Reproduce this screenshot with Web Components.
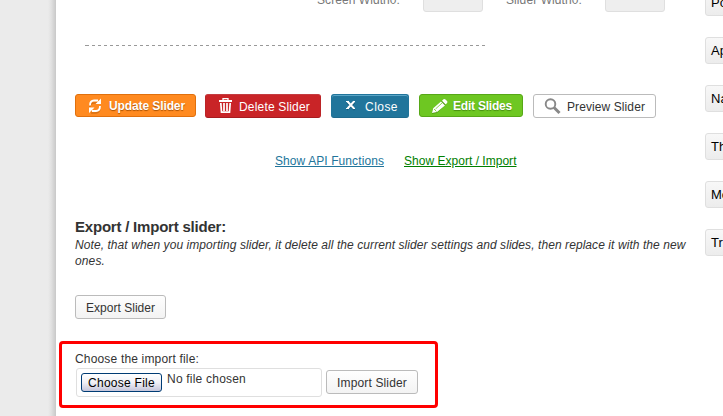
<!DOCTYPE html>
<html lang="en"><head><meta charset="utf-8"><title>Slider settings</title>
<style>html,body{margin:0;width:723px;height:416px;overflow:hidden;background:#fff}</style></head>
<body><slider-page></slider-page>
<script>
// Inline text whose tracking is adjusted to occupy a given width.
class FitText extends HTMLElement{
  connectedCallback(){
    const r=this.attachShadow({mode:'open'});
    r.innerHTML='<style>:host{display:inline-block;white-space:nowrap;flex:none}span{display:inline-block;white-space:nowrap}</style><span></span>';
    const s=r.querySelector('span');s.textContent=this.getAttribute('text');
    const w=+this.getAttribute('w');
    if(w){const n=s.textContent.length;s.style.letterSpacing=((w-s.getBoundingClientRect().width)/n)+'px';this.style.width=w+'px';}
    if(this.hasAttribute('underline'))s.style.textDecoration='underline';
  }
}
// Push button: kind selects the colours, the icon slot precedes the label.
class SliderButton extends HTMLElement{
  connectedCallback(){
    this.attachShadow({mode:'open'}).innerHTML=`<style>
:host{display:flex;box-sizing:border-box;flex:none;height:24px;border:1px solid #bbb;border-radius:3px;background:linear-gradient(#fefefe,#f3f3f3);color:#333;line-height:14px;padding:5px 0 0 10px}
:host([kind=orange]){height:23px;background:#ff8a20;border-color:#e0700d;color:#fff;font-weight:bold;text-shadow:0 1px 1px #a85000;padding-top:4px}
:host([kind=red]){background:#c92427;border-color:#c43c40 #bb2427 #a71c20;color:#fff}
:host([kind=blue]){background:#21759b;border-color:#21759b #21759b #1e6a8d;box-shadow:inset 0 1px 0 #5aa5c6;color:#fff}
:host([kind=green]){height:23px;background:#6ec722;border-color:#57a817;color:#fff;font-weight:bold;text-shadow:0 1px 1px #468c10;padding-top:4px}
:host([kind=white]){background:#fff}
::slotted(svg){margin:-2px 0 0 -10px;flex:none;height:18px;overflow:visible}
</style><slot name="icon"></slot><slot></slot>`;
  }
}
class SidePanelTab extends HTMLElement{
  connectedCallback(){
    this.attachShadow({mode:'open'}).innerHTML=`<style>:host{display:block;box-sizing:border-box;height:27px;width:60px;margin-bottom:21px;border:1px solid #dfdfdf;border-radius:3px;background:linear-gradient(#f8f8f8,#ececec);font-size:13px;line-height:25px;padding-left:5px;color:#000;white-space:nowrap}</style><slot></slot>`;
  }
}
class FilePicker extends HTMLElement{
  connectedCallback(){
    this.attachShadow({mode:'open'}).innerHTML=`<style>
:host{display:flex;box-sizing:border-box;width:246px;height:29px;border:1px solid #dfdfdf;border-radius:3px;padding:4px;line-height:14px;color:#333}
.choose{box-sizing:border-box;width:81px;height:19px;border:1px solid #003c74;border-radius:3px;background:linear-gradient(#fff,#f0f0f6 50%,#c5c5da);padding:2px 0 0 6px;color:#000;margin-right:5px;flex:none}
.name{margin-top:-1px}</style><div class="choose"><fit-text text="Choose File" w="67"></fit-text></div><div class="name"><fit-text text="No file chosen" w="79"></fit-text></div>`;
  }
}
class SliderPage extends HTMLElement{
  connectedCallback(){
    this.attachShadow({mode:'open'}).innerHTML=`<style>
:host{display:grid;grid-template-columns:56px 649px 18px;width:723px;height:416px;overflow:hidden;background:#fff;font:12px/16px "Liberation Sans",Arial,sans-serif;color:#333}
.rail{background:linear-gradient(90deg,transparent 48px,#0000000a 51px,#00000026 56px),#ebebeb;height:416px}
main{padding-left:19px;height:416px;box-sizing:border-box;min-width:0}
.fields{display:flex;height:45px;padding-left:242px;color:#777}
.fields fit-text{margin-top:-8px}
.field{box-sizing:border-box;width:60px;height:22px;margin-top:-10px;border:1px solid #dfdfdf;border-radius:3px;background:#eee}
.rule{width:400px;height:1px;margin-left:10px;background:repeating-linear-gradient(90deg,#999 0 3px,transparent 3px 6px) 1px 0,linear-gradient(#999,#999) 0 0/1px 1px no-repeat}
.actions{display:flex;margin-top:48px;height:24px}
.links{display:flex;gap:20px;margin:35px 0 0 200px;height:16px;color:#21759b}
.green{color:#008000}
h3{margin:49px 0 0;font-size:15px;line-height:18px;height:19px}
.note{font-style:italic;height:32px}
.export{width:91px;margin-top:26px}
.frame{box-sizing:border-box;width:379px;height:67px;margin:22px 0 0 -16px;border:3px solid #f00;border-radius:4px;padding:7px 0 0 13px}
.upload{display:flex;gap:4px;margin:1px 0 0 1px}
.upload slider-button{margin-top:2px;width:92px}
aside{padding-top:0;margin-top:-11px;height:427px;overflow:hidden}
</style>
<div class="rail"></div>
<main>
<div class="fields"><fit-text text="Screen Width0:" w="83"></fit-text><div class="field" style="margin-left:23px"></div><fit-text text="Slider Width0:" w="76" style="margin-left:23px"></fit-text><div class="field" style="margin-left:23px"></div></div>
<div class="rule"></div>
<div class="actions">
<slider-button kind="orange" style="width:121px;margin-right:9px"><svg slot="icon" width="33" height="18" viewBox="0 0 33 18"><g transform="translate(0 1)"><g fill="none" stroke="#a85000" stroke-width="1.500" opacity=".45" transform="translate(0 1)"><path d="M14 8V7.500Q14 4 18 4H22M24 10Q23 14 19 14H15"/></g><g fill="none" stroke="#fff" stroke-width="1.800"><path d="M14 7.500C14 4 15.500 2.500 18 2.500H22M24 8C24 11.500 22.500 13 20 13H16"/></g><path fill="#fff" d="M25 .500V6H19.500zM13 15V9.500H18.500z"/></g></svg><fit-text text="Update Slider" w="76"></fit-text></slider-button>
<slider-button kind="red" style="width:116px;margin-right:10px"><svg slot="icon" width="33" height="18" viewBox="0 0 33 18"><g fill="none" stroke="#fff"><path stroke-width="2" d="M13 3H26"/><path stroke-width="1.300" d="M17 2.500V.700H22V2.500"/><path stroke-width="1.700" d="M14.800 5L15.500 14.200H23.500L24.200 5M18 5V13M21 5V13"/></g></svg><fit-text text="Delete Slider" w="71"></fit-text></slider-button>
<slider-button kind="blue" style="width:78px;margin-right:10px"><svg slot="icon" width="33" height="18" viewBox="0 0 33 18"><path fill="none" stroke="#083f5a" stroke-width="1.500" opacity=".5" d="M15 5L22.500 12M22.500 5L15 12"/><path fill="none" stroke="#fff" stroke-width="1.900" d="M15.500 3.500L22 10.500M22 3.500L15.500 10.500"/><path stroke="#fff" d="M14 3.500H17M21 3.500H23M14 10.500H17M21 10.500H23"/></svg><fit-text text="Close" w="33"></fit-text></slider-button>
<slider-button kind="green" style="width:104px;margin-right:10px"><svg slot="icon" width="33" height="18" viewBox="0 0 33 18"><path fill="#468c10" opacity=".7" d="M12 17L13 12L22 4L26 7.500L17 16z"/><path fill="#fff" d="M12 16L13.200 11.300L21 4.500L25 8.500L17 15zM22 3.700L23.500 2.300Q24.500 1.500 25.500 2.500L27 4Q28 5 27 6L25.700 7.500z"/><path fill="none" stroke="#6ec722" stroke-width=".8" d="M14 12L16.500 14.500M15.500 12L22 6"/></svg><fit-text text="Edit Slides" w="59"></fit-text></slider-button>
<slider-button kind="white" style="width:123px"><svg slot="icon" width="33" height="18" viewBox="0 0 33 18"><circle cx="16.500" cy="6" r="4.800" fill="none" stroke="#888" stroke-width="1.900"/><path d="M20 9.500L25.500 15" stroke="#888" stroke-width="3"/></svg><fit-text text="Preview Slider" w="78"></fit-text></slider-button>
</div>
<div class="links"><fit-text text="Show API Functions" w="109" underline></fit-text><fit-text class="green" text="Show Export / Import" w="112.500" underline></fit-text></div>
<h3><fit-text text="Export / Import slider:" w="151"></fit-text></h3>
<div class="note"><fit-text text="Note, that when you importing slider, it delete all the current slider settings and slides, then replace it with the new" w="610.500"></fit-text><br><fit-text text="ones." w="30"></fit-text></div>
<slider-button class="export"><fit-text text="Export Slider" w="69"></fit-text></slider-button>
<div class="frame"><div><fit-text text="Choose the import file:" w="124"></fit-text></div><div class="upload"><file-picker></file-picker><slider-button><fit-text text="Import Slider" w="70"></fit-text></slider-button></div></div>
</main>
<aside><side-panel-tab>Po</side-panel-tab><side-panel-tab>Ap</side-panel-tab><side-panel-tab>Na</side-panel-tab><side-panel-tab>Th</side-panel-tab><side-panel-tab>Mo</side-panel-tab><side-panel-tab>Tr</side-panel-tab></aside>`;
  }
}
customElements.define('fit-text',FitText);
customElements.define('slider-button',SliderButton);
customElements.define('side-panel-tab',SidePanelTab);
customElements.define('file-picker',FilePicker);
customElements.define('slider-page',SliderPage);
</script></body></html>
